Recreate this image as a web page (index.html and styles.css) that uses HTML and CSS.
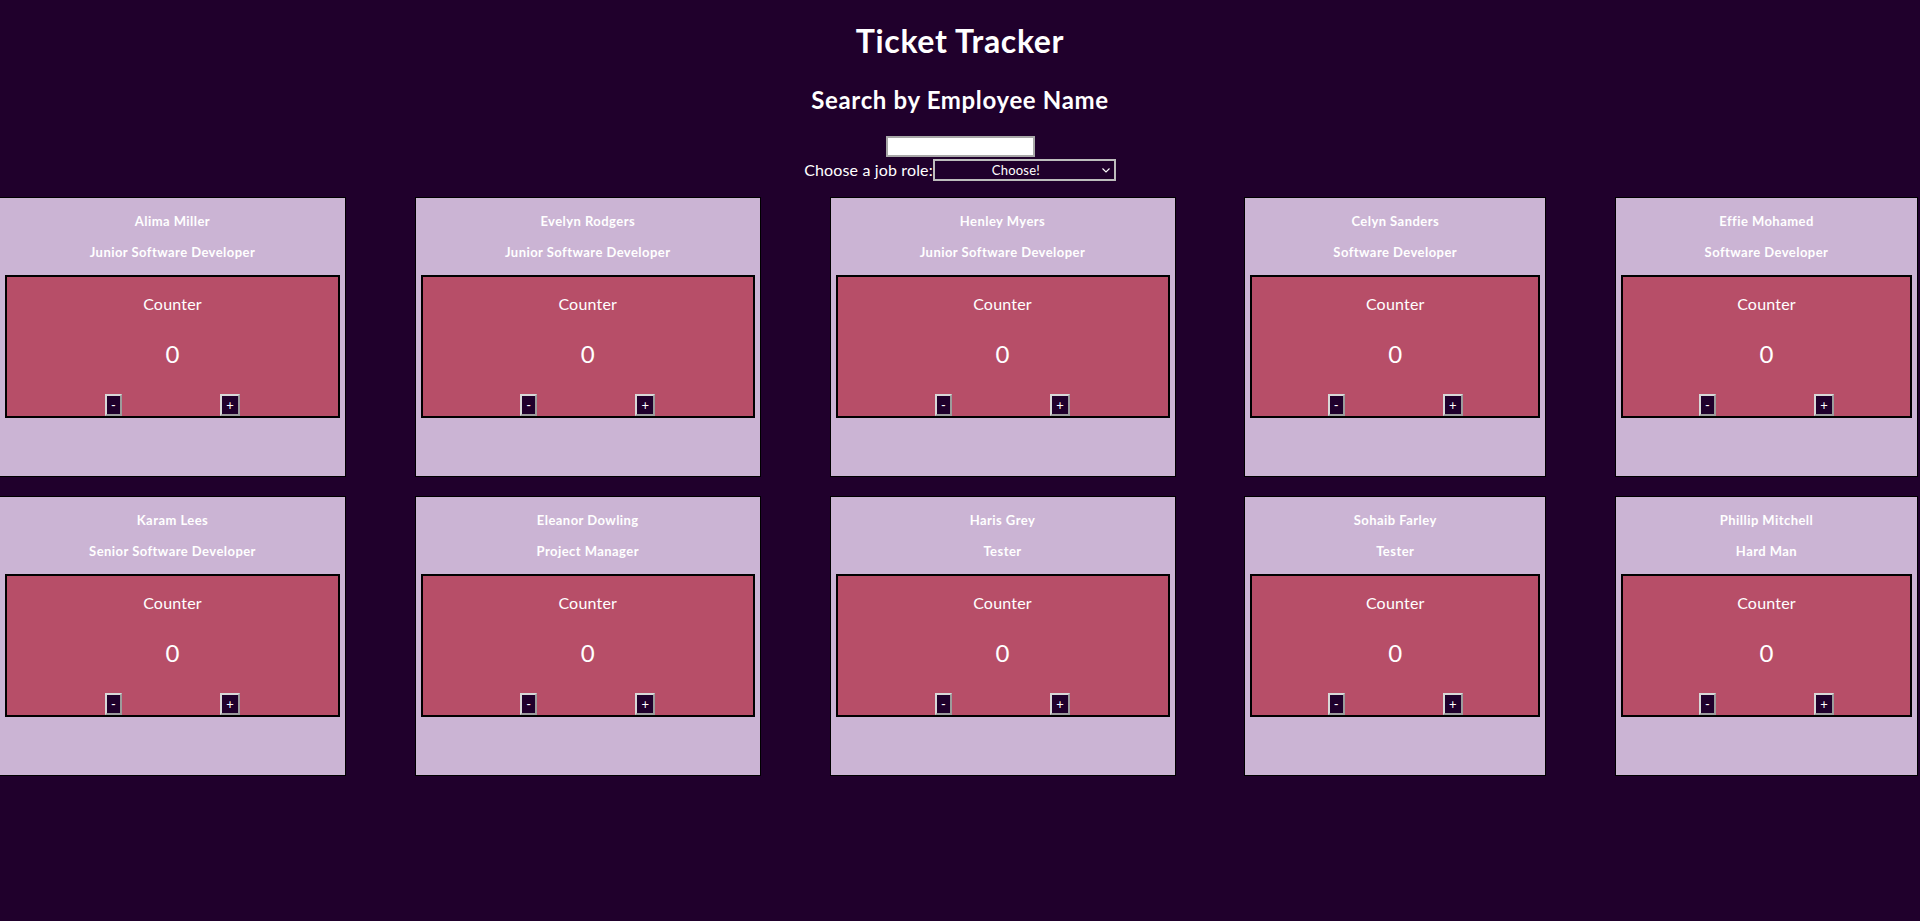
FILE: index.html
```html
<!DOCTYPE html>
<html lang="en">
<head>
<meta charset="utf-8">
<title>Ticket Tracker</title>
<link rel="stylesheet" href="styles.css">
</head>
<body>
<div class="app">
  <header class="top">
    <h1 class="title">Ticket Tracker</h1>
    <h2 class="subtitle">Search by Employee Name</h2>
    <div class="filters">
      <input class="search" type="text" aria-label="Search by employee name">
      <div class="role-row">
        <label class="role-label" for="role">Choose a job role:</label>
        <span class="select-wrap">
          <select id="role" class="role-select"><option>Choose!</option></select>
          <svg class="chevron" width="8" height="5" viewBox="0 0 8 5"><path d="M0.5 0.5 L4 4 L7.5 0.5" fill="none" stroke="#ffffff" stroke-width="1.1"/></svg>
        </span>
      </div>
    </div>
  </header>

  <main class="grid">
    <section class="card"><p class="name">Alima Miller</p><p class="role">Junior Software Developer</p>
      <div class="counter"><p class="counter-label">Counter</p><p class="counter-value">0</p><div class="counter-actions"><button class="btn btn-minus">-</button><button class="btn btn-plus">+</button></div></div></section>
    <section class="card"><p class="name">Evelyn Rodgers</p><p class="role">Junior Software Developer</p>
      <div class="counter"><p class="counter-label">Counter</p><p class="counter-value">0</p><div class="counter-actions"><button class="btn btn-minus">-</button><button class="btn btn-plus">+</button></div></div></section>
    <section class="card"><p class="name">Henley Myers</p><p class="role">Junior Software Developer</p>
      <div class="counter"><p class="counter-label">Counter</p><p class="counter-value">0</p><div class="counter-actions"><button class="btn btn-minus">-</button><button class="btn btn-plus">+</button></div></div></section>
    <section class="card"><p class="name">Celyn Sanders</p><p class="role">Software Developer</p>
      <div class="counter"><p class="counter-label">Counter</p><p class="counter-value">0</p><div class="counter-actions"><button class="btn btn-minus">-</button><button class="btn btn-plus">+</button></div></div></section>
    <section class="card"><p class="name">Effie Mohamed</p><p class="role">Software Developer</p>
      <div class="counter"><p class="counter-label">Counter</p><p class="counter-value">0</p><div class="counter-actions"><button class="btn btn-minus">-</button><button class="btn btn-plus">+</button></div></div></section>

    <section class="card"><p class="name">Karam Lees</p><p class="role">Senior Software Developer</p>
      <div class="counter"><p class="counter-label">Counter</p><p class="counter-value">0</p><div class="counter-actions"><button class="btn btn-minus">-</button><button class="btn btn-plus">+</button></div></div></section>
    <section class="card"><p class="name">Eleanor Dowling</p><p class="role">Project Manager</p>
      <div class="counter"><p class="counter-label">Counter</p><p class="counter-value">0</p><div class="counter-actions"><button class="btn btn-minus">-</button><button class="btn btn-plus">+</button></div></div></section>
    <section class="card"><p class="name">Haris Grey</p><p class="role">Tester</p>
      <div class="counter"><p class="counter-label">Counter</p><p class="counter-value">0</p><div class="counter-actions"><button class="btn btn-minus">-</button><button class="btn btn-plus">+</button></div></div></section>
    <section class="card"><p class="name">Sohaib Farley</p><p class="role">Tester</p>
      <div class="counter"><p class="counter-label">Counter</p><p class="counter-value">0</p><div class="counter-actions"><button class="btn btn-minus">-</button><button class="btn btn-plus">+</button></div></div></section>
    <section class="card"><p class="name">Phillip Mitchell</p><p class="role">Hard Man</p>
      <div class="counter"><p class="counter-label">Counter</p><p class="counter-value">0</p><div class="counter-actions"><button class="btn btn-minus">-</button><button class="btn btn-plus">+</button></div></div></section>
  </main>
</div>
</body>
</html>
```
FILE: styles.css
```css
html, body {
  margin: 0;
  padding: 0;
}

body {
  background: #20002c;
  color: #ffffff;
  font-family: Lato, "Open Sans", "Noto Sans", sans-serif;
  overflow: hidden;
}

.app {
  width: 1920px;
}

.top {
  display: flex;
  flex-direction: column;
  align-items: center;
}

.title {
  font-size: 32px;
  line-height: 43px;
  font-weight: 700;
  letter-spacing: 0.65px;
  margin: 19px 0 0;
}

.subtitle {
  font-size: 24px;
  line-height: 32px;
  font-weight: 700;
  letter-spacing: 0.65px;
  margin: 22px 0 0;
}

.filters {
  margin-top: 20px;
  display: flex;
  flex-direction: column;
  align-items: center;
  gap: 2px;
}

.search {
  width: 149px;
  height: 21px;
  box-sizing: border-box;
  margin: 0;
  padding: 1px 2px;
  border: 2px solid #a8a8a8;
  background: #ffffff;
  font: 13px Lato, sans-serif;
}

.role-row {
  display: flex;
  align-items: center;
  height: 22px;
}

.role-label {
  font-size: 16px;
  line-height: 22px;
  letter-spacing: 0.15px;
}

.select-wrap {
  position: relative;
  display: block;
  width: 183px;
  height: 22px;
}

.role-select {
  -webkit-appearance: none;
  appearance: none;
  width: 183px;
  height: 22px;
  box-sizing: border-box;
  margin: 0;
  padding: 0 17px 0 0;
  border: 2px solid #bdbdbd;
  border-radius: 0;
  background: #20002c;
  color: #ffffff;
  font: 13px Lato, sans-serif;
  letter-spacing: 0.2px;
  text-align: center;
  text-align-last: center;
}

.chevron {
  position: absolute;
  right: 6px;
  top: 9px;
  pointer-events: none;
}

.grid {
  display: grid;
  grid-template-columns: 347px 346px 346px 302px 303px;
  column-gap: 68.75px;
  row-gap: 19px;
  margin: 16px 0 0 -1px;
}

.card {
  height: 280px;
  box-sizing: border-box;
  background: #cbb4d4;
  border: 1px solid #000000;
  text-align: center;
}

.name,
.role {
  font-size: 13px;
  line-height: 18px;
  font-weight: 700;
  letter-spacing: 0.45px;
  margin: 13.5px 0;
  color: #ffffff;
}

.counter {
  margin: 0 5px;
  border: 2px solid #000000;
  background: #b74e68;
}

.counter-label {
  font-size: 16px;
  line-height: 21px;
  letter-spacing: 0.2px;
  margin: 16px 0 0;
}

.counter-value {
  font-size: 24px;
  line-height: 32px;
  margin: 24px 0;
}

.counter-actions {
  display: flex;
  justify-content: center;
  gap: 98px;
}

.btn {
  height: 22px;
  box-sizing: border-box;
  margin: 0;
  padding: 0;
  border: 2px solid;
  border-color: #d8d8d8 #9c9c9c #9c9c9c #d8d8d8;
  background: #20002c;
  color: #ffffff;
  font: 13px Lato, sans-serif;
  line-height: 18px;
}

.btn-minus {
  width: 17px;
}

.btn-plus {
  width: 20px;
}
```
